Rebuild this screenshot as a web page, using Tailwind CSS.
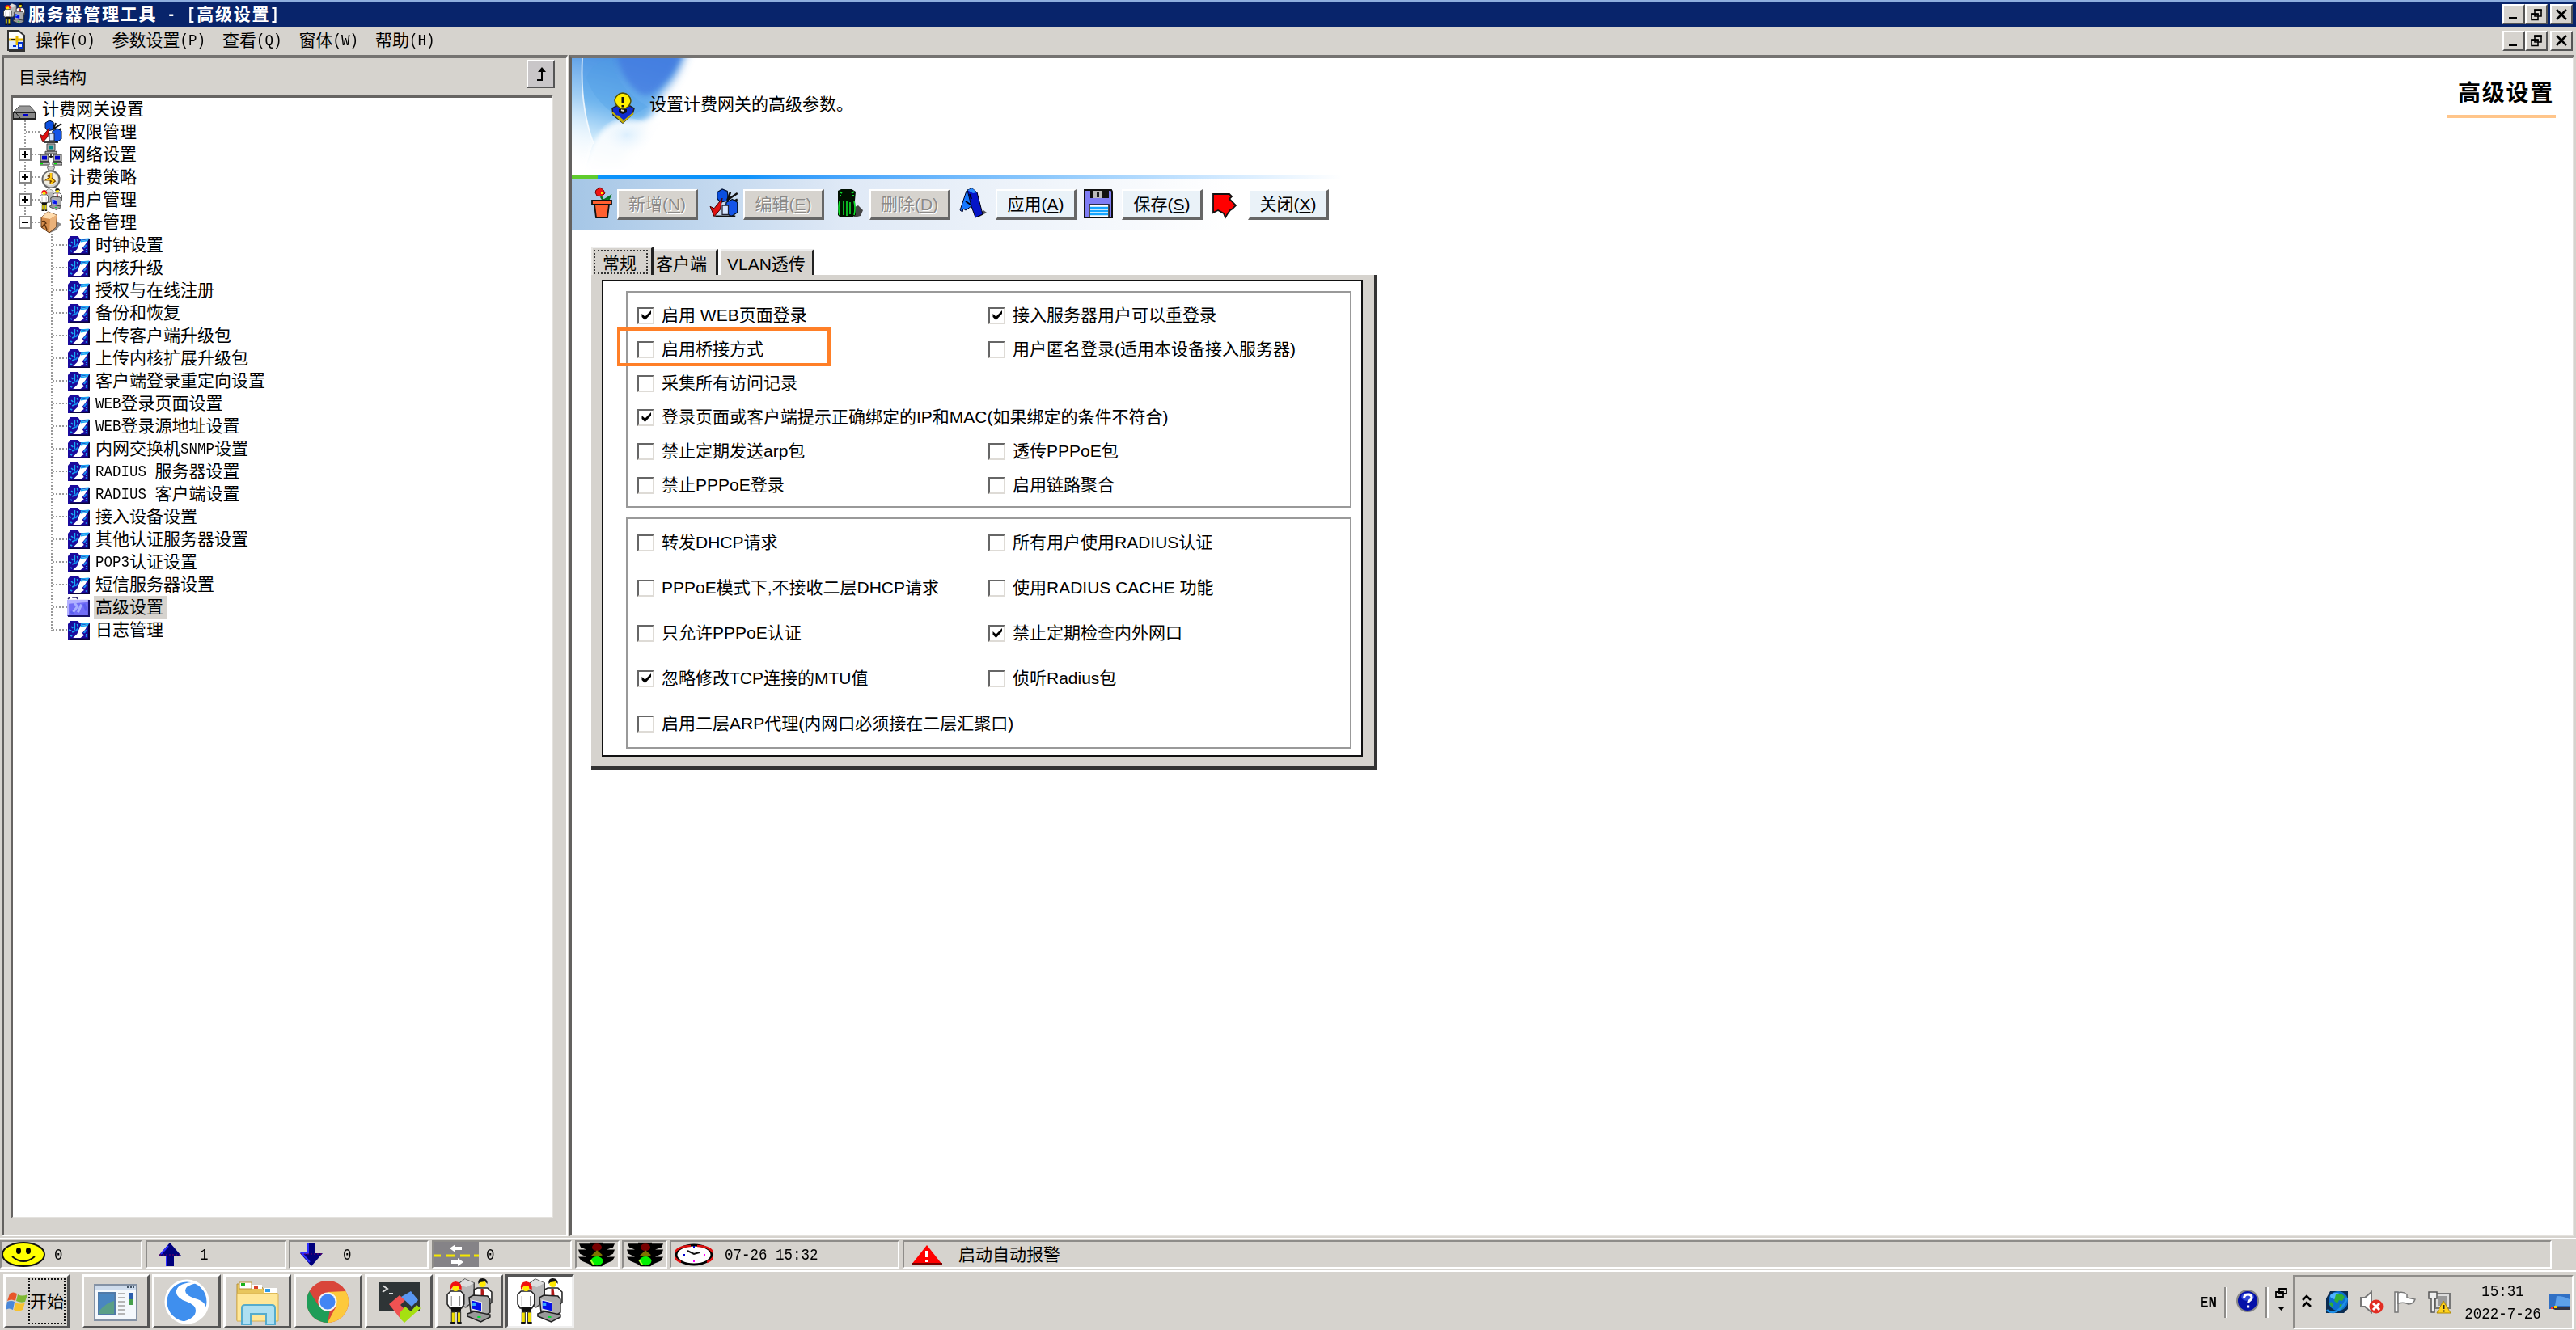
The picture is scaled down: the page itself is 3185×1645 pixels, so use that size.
<!DOCTYPE html>
<html lang="zh">
<head>
<meta charset="utf-8">
<title>服务器管理工具</title>
<script src="https://cdn.jsdelivr.net/npm/@tailwindcss/browser@4"></script>
</head>
<body class="w-[3185px] h-[1645px] overflow-hidden bg-[#d6d3ce] text-black text-[21px] leading-[28px] font-['Liberation_Sans','Noto_Sans_CJK_SC',sans-serif] whitespace-nowrap flex flex-col">

<svg class="hidden">
  <symbol id="people" viewBox="0 0 55 57" preserveAspectRatio="none">
    <path d="M13 8 22 1l11 5v22l-10 8-10-4z" fill="#b8b8b8" stroke="#444" stroke-width="1.500"/><path d="M22 1l11 5-9 5-10-3z" fill="#dedede"/>
    <path d="M33 14 37 12h12l5 5v13l-5 4-16-3z" fill="#fff" stroke="#222" stroke-width="1.500"/>
    <path d="M41 13h3l1 9-2 4-2-4z" fill="#b01818"/><circle cx="43" cy="7" r="4" fill="#ffe800"/>
    <path d="M38 7q-1-7 5-7t6 7l-3-3-6 1z" fill="#111"/>
    <path d="M1 20 5 16h12l4 4v12l-3 5H4l-3-5z" fill="#fff" stroke="#222" stroke-width="1.500"/><path d="M6 22v12M16 22v12" stroke="#888"/>
    <circle cx="11" cy="12" r="4" fill="#ffe800"/><path d="M5 14Q3 5 11 4q8 1 7 10l-3-1-1-4-6 1z" fill="#f01010"/>
    <path d="M5 35h13l-1 7H6z" fill="#111"/><path d="M6 42h4v13H6zM13 42h4v13h-4z" fill="#f0e000" stroke="#333"/>
    <path d="M5 54h5v3H5zM13 54h5v3h-5z" fill="#111"/>
    <path d="M27 24l5-3 17 1 3 4v16l-4 3-19-3z" fill="#ababab" stroke="#222" stroke-width="1.500"/>
    <path d="M30 27l12 3v11l-12-3z" fill="#0510e8" stroke="#eee"/><path d="M31 30h4v4h-4z" fill="#3af"/>
    <path d="M25 44l8-3 19 4v3l-11 6-16-7z" fill="#999" stroke="#222" stroke-width="1.500"/><path d="M37 47h4v2h-4z" fill="#0d3"/>
  </symbol>
  <symbol id="restore" viewBox="0 0 14 15"><path d="M5 1.500h8v8H5zM1 6.500h8v7.500H1z" fill="#d6d3ce" stroke="#000" stroke-width="1.600"/><path d="M4.200 2.200h9.600M.2 7.200h9.600" stroke="#000" stroke-width="2.400"/></symbol>
  <symbol id="perm" viewBox="0 0 28 28" preserveAspectRatio="none">
    <path d="M7 3 12 0l5 2 1 9-8 2-3-4z" fill="#0a4fe0" stroke="#013"/><path d="M18 10 27 4M20 3l-3 8M23 12l4-2" stroke="#111" stroke-width="2"/>
    <path d="M16 13l6-3 5 3v10l-6 4-6-4z" fill="#1455e8" stroke="#012"/><path d="M12 16h6v9h-6z" fill="#d5e6ff" stroke="#223"/>
    <path d="M0 17l4 2L12 9l-2 11-6 7z" fill="#e01010" stroke="#400" stroke-width=".8"/><path d="M5 27h18" stroke="#111" stroke-width="1.600"/>
  </symbol>
  <symbol id="net" viewBox="0 0 28 30" preserveAspectRatio="none">
    <path d="M9 1h10v9H9zM7 11h14v3H7z" fill="#aaa" stroke="#444"/><path d="M11 3h6v5h-6z" fill="#088"/><path d="M14 14v6M6 18h17" stroke="#111" stroke-width="1.600"/>
    <path d="M1 15h10v9H1zM17 15h10v9H17z" fill="#aaa" stroke="#333"/><path d="M3 17h6v5H3zM19 17h6v5h-6z" fill="#00c"/>
    <path d="M0 25h12v4H0zM16 25h12v4H16z" fill="#bbb" stroke="#333"/><path d="M1 26h3v2H1zM18 26h3v2h-3z" fill="#0e0"/>
  </symbol>
  <symbol id="coin" viewBox="0 0 28 28" preserveAspectRatio="none">
    <path d="M9 1q5-3 10 0l-2 5h-6z" fill="#ccc" stroke="#777"/><circle cx="14" cy="17" r="10.500" fill="#d0d0d0" stroke="#666" stroke-width="2"/><circle cx="13" cy="16" r="8.500" fill="#f1eee0"/>
    <path d="M14 9v5l-4 3h4v6M14 15l4 4-4 3M10 12l4 2" stroke="#7a4a00" stroke-width="3" fill="none"/><path d="M14 9v6l-3 2h3l3 2-3 3" stroke="#ffc810" stroke-width="2" fill="none"/>
  </symbol>
  <symbol id="box" viewBox="0 0 28 28" preserveAspectRatio="none">
    <path d="M13 27l7-3 7-8-6-3z" fill="#888"/><path d="M2 8 10 1l11 4-1 15-8 7-10-7z" fill="#d58d4c" stroke="#5c3210"/><path d="M2 8 10 1l11 4-8 5z" fill="#ffdcae"/>
    <path d="M13 10 21 5l-1 15-8 6z" fill="#eab27a"/><path d="M3 13q4-2 5 3M3 20l3-4 3 7" stroke="#5c3210" stroke-width="1.500" fill="none"/>
  </symbol>
  <symbol id="leaf" viewBox="0 0 26 23" preserveAspectRatio="none">
    <path d="M0 4 3 0h9l2 3h12v20H0z" fill="#1b0a9c"/><path d="M24 4h2v19H2v-1.500h22z" fill="#0a0440"/>
    <path d="M15 6l9-2-3 6-4 5 2 3-4 3H6l5-5 1-3z" fill="#fff"/><path d="M16 4l8-.5-1 2-7 1zM8 3v8M4 7l2 2M1 11l3 1M5 14l4-2M11 4l1 3M3 18l2 1M20 13l1 1M21 19h2M22 16v1" fill="none" stroke="#19a7f5" stroke-width="1.700"/>
    <path d="M12 9l-3 4M19 15l3-4" stroke="#1482f0" stroke-width="2"/>
  </symbol>
  <symbol id="folder" viewBox="0 0 27 25" preserveAspectRatio="none">
    <path d="M0 3h26v21H0z" fill="#716df6"/><path d="M1 2l2-2M6 0h5l2 2" stroke="#2a2470" stroke-width="1.500" fill="none"/><path d="M0 3h25v3L2 8v15H0z" fill="#b3b1ff"/><path d="M9 7l3 5-5 7M17 9l-4 10" stroke="#a9b0ff" stroke-width="3" fill="none"/><path d="M20 8l3 9M4 18l4 3" stroke="#5a5eee" stroke-width="3"/><path d="M26 3v21H1" stroke="#16106a" stroke-width="2" fill="none"/>
  </symbol>
  <symbol id="light" viewBox="0 0 46 42" preserveAspectRatio="none">
    <path d="M14 1h17v2h14l-2 6-8 4h10l-2 7-8 5h10l-3 7-9 5-4 4H17l-4-4-9-5-4-7h10l-8-5-2-7h10L3 9 1 3h13z" fill="#000"/>
    <circle cx="23" cy="9" r="6" fill="#780000"/><path d="M23 14l7 8-6 4-8-3z" fill="#7d7400"/><circle cx="23" cy="32" r="7.500" fill="#00f000"/><path d="M15 30l4 8" stroke="#aaff30" stroke-width="2"/>
  </symbol>
</svg>

<!-- title bar -->
<header class="h-[33px] shrink-0 border-t-2 border-[#8eaede] bg-[#08246b] flex items-center pl-1 pr-1">
  <svg class="w-[27px] h-[27px]"><use href="#people"/></svg>
  <div class="mono ml-1 text-white font-bold tracking-[1.75px] grow">服务器管理工具 - [高级设置]</div>
  <div class="winbtns flex"></div>
</header>

<!-- menu bar -->
<nav class="h-[34px] shrink-0 flex items-center pl-[9px] pr-1">
  <svg class="w-[22px] h-[27px] mr-[13px]" viewBox="0 0 22 27"><path d="M1 1h13l7 6v18H1z" fill="#fff" stroke="#333" stroke-width="2"/><path d="M2 12h18v12H2z" fill="#dce9ff"/><path d="M2 12h18M12 7v12" stroke="#e8b800" stroke-width="3"/><path d="M4 12h6" stroke="#222" stroke-width="2"/><path d="M7 20h4M14 16h5v6h-5z" stroke="#0030d0" stroke-width="2" fill="none"/><path d="M21 8v18H2" stroke="#333" stroke-width="2" fill="none"/></svg>
  <div class="flex gap-[21px] grow mono"><span>操作(O)</span><span>参数设置(P)</span><span>查看(Q)</span><span>窗体(W)</span><span>帮助(H)</span></div>
  <div class="winbtns flex"></div>
</nav>

<main class="h-[1464px] shrink-0 pt-[1px] pl-[2px] flex gap-[2px]">
  <!-- tree panel -->
  <aside class="w-[700px] h-[1461px] border-l-3 border-t-4 border-l-[#63615f] border-t-[#757371] border-r-2 border-b-2 border-r-white border-b-white pl-2">
    <div class="h-[45px] flex justify-between pl-[10px] pr-[14px] pt-[2px]">
      <span class="mt-[8px]">目录结构</span>
      <div class="w-[35px] h-[35px] border-2 border-t-white border-l-white border-r-[#555] border-b-[#555] bg-[#c9c6c8] flex items-center justify-center">
        <svg class="w-[14px] h-[18px]" viewBox="0 0 14 18"><path d="M8 3v13H2" fill="none" stroke="#000" stroke-width="2"/><path d="M8 0l5 6H3z"/></svg>
      </div>
    </div>
    <div class="relative w-[671px] h-[1390px] bg-white border-l-3 border-t-4 border-[#666462] border-r-2 border-b-2 border-r-[#e4e2de] border-b-[#e4e2de]">
      <div class="absolute left-[14px] top-[28px] h-[120px] border-l-2 border-dotted border-[#999]"></div>
      <div class="absolute left-[47px] top-[168px] h-[492px] border-l-2 border-dotted border-[#999]"></div>
      <div id="tree" class="relative"></div>
    </div>
  </aside>

  <!-- content panel -->
  <section class="w-[2479px] h-[1461px] bg-white border-l-3 border-t-4 border-l-[#63615f] border-t-[#757371] border-r-2 border-b-2 border-r-[#e4e2de] border-b-[#e4e2de]">
    <div class="h-[144px] relative flex">
      <svg class="absolute left-0 top-0 w-[180px] h-[144px]" viewBox="0 0 180 144">
        <defs>
          <linearGradient id="sky" gradientUnits="userSpaceOnUse" x1="80" y1="0" x2="45" y2="140"><stop offset="0" stop-color="#4a90e2"/><stop offset=".45" stop-color="#6db4ee"/><stop offset=".72" stop-color="#c3e4fa"/><stop offset="1" stop-color="#fff"/></linearGradient>
          <linearGradient id="edge" x1="0" y1="0" x2="0" y2="1"><stop offset="0" stop-color="#fff" stop-opacity=".1"/><stop offset="1" stop-color="#fff" stop-opacity=".9"/></linearGradient>
          <filter id="soft" filterUnits="userSpaceOnUse" x="-60" y="-60" width="300" height="300"><feGaussianBlur stdDeviation="6"/></filter>
          <filter id="soft2" filterUnits="userSpaceOnUse" x="-60" y="-60" width="300" height="300"><feGaussianBlur stdDeviation="3"/></filter>
          <radialGradient id="disc" cx=".5" cy=".4"><stop offset="0" stop-color="#dceffd"/><stop offset="1" stop-color="#fff" stop-opacity="0"/></radialGradient>
        </defs>
        <path d="M-50-50H152Q140 16 112 42L96 74 60 130-50 190z" fill="url(#sky)" filter="url(#soft)"/>
        <path d="M54-20H140Q132 16 104 40 88 52 76 36 58 20 54-20z" fill="#4376e0" opacity=".65" filter="url(#soft2)"/>
        <path d="M18 24Q26 4 50 0q2 34 44 60L66 76Q30 60 18 24z" fill="#4f9fe6" opacity=".3"/>
        <path d="M0 0h12Q10 50 26 106L14 144H0z" fill="url(#edge)"/>
        <path d="M13 0Q10 60 27 106" stroke="#fff" stroke-width="1.800" fill="none" opacity=".75"/>
        <path d="M16 144Q20 92 58 78q34 2 60-10l10 76z" fill="#fff" opacity=".85" filter="url(#soft2)"/><ellipse cx="68" cy="100" rx="36" ry="26" fill="url(#disc)"/>
      </svg>
      <svg class="relative ml-[49px] mt-[42px] w-[29px] h-[39px]" viewBox="0 0 29 39"><path d="M1 20l5-3h17l5 3-2 7-12 11L2 28z" fill="#0f2bd0" stroke="#222" stroke-width="1.500"/><path d="M1 25l13 12 13-11M7 29l7 6" stroke="#c8b400" stroke-width="2" fill="none"/><path d="M9 21h10v4l-5 2-5-2z" fill="#111"/><path d="M12 22l3 1" stroke="#ddd" stroke-width="2"/><path d="M14 1q9 1 10 10-1 8-10 10Q5 18 4 10 6 2 14 1z" fill="#fff000" stroke="#555100" stroke-width="1.500"/><path d="M14 6v8" stroke="#111" stroke-width="3"/><path d="M14 16v2.500" stroke="#111" stroke-width="3"/></svg>
      <span class="relative ml-[18px] mt-[43px]">设置计费网关的高级参数。</span>
      <div class="ml-auto mr-[21px] mt-[22px] w-[134px] h-[52px] border-b-4 border-[#ffc58a] text-[28px] leading-[43px] font-bold tracking-[1.75px] pl-[13px]">高级设置</div>
    </div>
    <div class="h-[6px] flex"><div class="w-8 bg-[#5fcb2c]"></div><div class="w-[920px] bg-linear-to-r from-[#0b93fb] from-20% via-[#8cc8fc] via-60% to-white"></div></div>
    <div id="tools" class="h-[62px] w-[960px] flex bg-linear-to-r from-[#a5c6e6] via-[#dfe9f6] via-35% to-white to-85%"></div>

    <div class="ml-[24px] mt-[21px] flex items-end h-[35px]">
      <div class="w-[77px] h-[35px] border-t-2 border-l-2 border-r-3 border-t-[#eee] border-l-[#e8e6e2] border-r-[#222] bg-[#d6d3ce] pt-[2px] pl-[1px]"><div class="h-[30px] w-[67px] border-2 border-dotted border-[#333] pl-[9px] pt-px">常规</div></div>
      <div class="w-[80px] h-[32px] bg-[#d6d3ce] border-t-2 border-t-[#eee] border-r-3 border-[#222] pl-[3px] pt-[3px]">客户端</div>
      <div class="ml-[3px] w-[116px] h-[32px] bg-[#d6d3ce] border-t-2 border-t-[#eee] border-r-3 border-[#222] pl-[8px] pt-[3px]">VLAN透传</div>
    </div>
    <div class="relative ml-[24px] w-[971px] h-[612px] bg-[#d6d3ce] border-r-3 border-b-4 border-[#333] pl-[13px] pt-[6px]">
      <div class="w-[941px] h-[590px] bg-white border-2 border-[#111] pl-[28px] pt-[12px]">
        <div class="w-[897px] h-[268px] border-2 border-[#999] pl-[12px] pt-[7px]" id="g1"></div>
        <div class="mt-[12px] w-[897px] h-[286px] border-2 border-[#999] pl-[12px] pt-px" id="g2"></div>
      </div>
      <div class="absolute left-[32px] top-[65px] w-[264px] h-[48px] border-4 border-[#ff7f27]"></div>
    </div>
  </section>
</main>

<!-- status bar -->
<footer class="mono h-[40px] shrink-0 border-t-[1px] border-white pt-[2px] flex *:h-[35px] *:flex *:items-center *:border-2 *:border-t-[#8e8c89] *:border-l-[#8e8c89] *:border-r-white *:border-b-white">
  <div class="w-[176px]"><svg class="w-[55px] h-[31px]" viewBox="0 0 55 31"><ellipse cx="27" cy="15.500" rx="26" ry="14.500" fill="#ff0" stroke="#111" stroke-width="2"/><ellipse cx="21" cy="11" rx="3" ry="4"/><ellipse cx="33" cy="11" rx="3" ry="4"/><path d="M13 18q14 12 28 0" fill="none" stroke="#111" stroke-width="2"/></svg><span class="ml-[10px]">0</span></div>
  <div class="w-[174px] ml-1"><svg class="w-[28px] h-[29px] ml-[14px]" viewBox="0 0 28 29"><path d="M14 0l14 16H19v13H9V16H0z" fill="#00007c"/><path d="M12 4 3 14M10 17v12" stroke="#2d2dff" stroke-width="2"/><path d="M1 15h26" stroke="#800060" stroke-dasharray="2 2"/></svg><span class="ml-[23px]">1</span></div>
  <div class="w-[173px] ml-[3px]"><svg class="w-[28px] h-[29px] ml-[12px]" viewBox="0 0 28 29"><path d="M14 29l14-16H19V0H9v13H0z" fill="#00007c"/><path d="M10 0v13H2l10 11" stroke="#2d2dff" stroke-width="2" fill="none"/><path d="M1 14h26" stroke="#800060" stroke-dasharray="2 2"/></svg><span class="ml-[25px]">0</span></div>
  <div class="w-[173px] ml-[4px]"><svg class="w-[56px] h-[31px]" viewBox="0 0 56 31"><path fill="#858387" d="M0 0h56v31H0z"/><path d="M1 17h55" stroke="#f5e800" stroke-width="3" stroke-dasharray="8 6 12 6 12 5"/><path d="M20 8l7-5v3h8v4h-8v3zM37 25l-7-5v3h-8v4h8v3z" fill="#fff"/></svg><span class="ml-[9px]">0</span></div>
  <div class="w-[55px] ml-[4px]"><svg class="w-[46px] h-[31px] ml-[2px]"><use href="#light"/></svg></div>
  <div class="w-[56px] ml-[3px]"><svg class="w-[46px] h-[31px] ml-[4px]"><use href="#light"/></svg></div>
  <div class="w-[284px] ml-[3px]"><svg class="w-[48px] h-[28px] ml-[4px]" viewBox="0 0 48 28"><ellipse cx="24" cy="14" rx="22" ry="12" fill="#fff" stroke="#000" stroke-width="3"/><path d="M8 23A20 11 0 0 1 20 3M28 3a20 11 0 0 1 12 20" fill="none" stroke="#e01010" stroke-width="2.500"/><path d="M16 9l8 4 7-2" fill="none" stroke="#111" stroke-width="2"/><path d="M24 3v3M11 14h2" stroke="#00c" stroke-width="2"/><path d="M36 14h2M24 21v2" stroke="#f0f" stroke-width="2"/></svg><span class="ml-[14px]">07-26 15:32</span></div>
  <div class="w-[2039px] ml-[4px]"><svg class="w-[38px] h-[24px] ml-[9px]" viewBox="0 0 38 24"><path d="M19 0l19 24H0z" fill="#f00"/><path d="M1 23h37" stroke="#700" stroke-width="2"/><path d="M19 7v8M19 18v3" stroke="#fff" stroke-width="4"/></svg><span class="ml-[20px]">启动自动报警</span></div>
</footer>

<!-- taskbar -->
<div class="h-[74px] shrink-0 border-t-2 border-white flex pt-[3px] pl-1 pr-[3px]">
  <div class="w-[82px] h-[67px] border-3 border-t-white border-l-white border-r-[#555] border-b-[#555] flex items-center">
    <svg class="w-[28px] h-[28px]" viewBox="0 0 28 28"><path d="M5 4q4-3 9 0l-2 9q-5-3-10 0z" fill="#e8562a"/><path d="M15 5q5 3 12 0l-3 9q-5 2-11-1z" fill="#7fb833"/><path d="M2 14q5-2 9 0l-2 10q-5-3-9 0z" fill="#4a88d8"/><path d="M12 15q6 3 12 0l-3 9q-5 3-11 0z" fill="#f7c22e"/></svg>
    <div class="w-[46px] h-[57px] border-2 border-dotted border-[#111] flex items-center justify-center">开始</div>
  </div>
  <div id="apps" class="ml-[15px] flex gap-[3px]"></div>
  <div class="ml-auto flex items-center">
    <span class="mono font-bold mr-[9px]">EN</span>
    <div class="w-[4px] h-[38px] border-l-2 border-r-2 border-l-[#8e8c89] border-r-white"></div>
    <svg class="w-[28px] h-[28px] ml-[11px] mr-[8px] mb-1" viewBox="0 0 28 28"><circle cx="14" cy="14" r="13" fill="#0510a8" stroke="#888" stroke-width="2"/><ellipse cx="14" cy="9" rx="8" ry="5" fill="#3048d8"/><path d="M9.500 11q0-5 5-5 4.500 0 4.500 4 0 2-3 4-1.500 1-1.500 3" fill="none" stroke="#fff" stroke-width="3"/><path d="M13 19.500h3.200v3H13z" fill="#fff"/></svg>
    <div class="w-[4px] h-[38px] border-l-2 border-r-2 border-l-[#8e8c89] border-r-white mr-[8px]"></div>
    <svg class="w-[16px] h-[30px] mr-[6px] mb-2" viewBox="0 0 16 30"><path d="M5 2h9v6H5zM1 6h9v6H1z" fill="#d6d3ce" stroke="#000" stroke-width="1.800"/><path d="M3 24h9l-4.500 5z"/></svg>
    <div class="w-[347px] h-[67px] border-2 border-t-[#8e8c89] border-l-[#8e8c89] border-r-white border-b-white flex items-center pl-[9px]">
      <svg class="w-[12px] h-[18px] mb-1" viewBox="0 0 12 18"><path d="M1 8l5-5 5 5M1 16l5-5 5 5" fill="none" stroke="#000" stroke-width="2.500"/></svg>
      <svg class="w-[29px] h-[29px] ml-[17px]" viewBox="0 0 29 29"><path d="M6 1h22v22l-5 5H1V10z" fill="#0c2c50"/><circle cx="16" cy="13" r="12" fill="#0d6fd0"/><ellipse cx="13" cy="7" rx="7" ry="4" fill="#4fb4ff"/><path d="M13 5l7-1 4 4-3 5-4-1-2 4-4-3zM18 17l5 1-2 5-4 1zM7 14l3 3-1 4-4-4z" fill="#2fae35"/><path d="M2 24q2 3 8 3 12-3 17-18" stroke="#1d8fe8" stroke-width="2.500" fill="none"/></svg>
      <svg class="w-[29px] h-[29px] ml-[14px]" viewBox="0 0 29 29"><path d="M1 9h5l8-7v25l-8-7H1z" fill="#fff" stroke="#777" stroke-width="2"/><circle cx="20" cy="20" r="8.500" fill="#e22c22"/><path d="M16 16l8 8M24 16l-8 8" stroke="#fff" stroke-width="3"/></svg>
      <svg class="w-[29px] h-[29px] ml-[12px]" viewBox="0 0 29 29"><path d="M2 2h4v25H2z" fill="#fff" stroke="#777" stroke-width="1.500"/><path d="M6 3q6-2 11 2v4l10 2q-2 6-8 6-5-3-13-1z" fill="#fff" stroke="#777" stroke-width="1.500"/></svg>
      <svg class="w-[29px] h-[29px] ml-[14px]" viewBox="0 0 29 29"><path d="M9 4h18v18H9z" fill="#ddd" stroke="#777" stroke-width="2"/><path d="M12 7h12v12H12z" fill="#999"/><path d="M1 2h10v8H8v17H4V10H1z" fill="#eee" stroke="#555" stroke-width="1.500"/><path d="M19 13l9 15H11z" fill="#ffd21c" stroke="#b08a00"/><path d="M19.500 18v5M19.500 24.500v2" stroke="#222" stroke-width="2"/></svg>
      <div class="mono ml-[14px] w-[99px] text-center leading-[28px]"><div>15:31</div><div>2022-7-26</div></div>
      <svg class="w-[28px] h-[22px] ml-[7px]" viewBox="0 0 28 22"><path d="M0 0h27v19H0z" fill="#2f6fc4"/><path d="M0 16h27v4H8z" fill="#334"/><path d="M10 3q9 0 16 4v8H8z" fill="#5da0ea"/><path d="M3 16h3v3H3z" fill="#f33"/><path d="M7 15h3v3H7z" fill="#fc0"/></svg>
    </div>
  </div>
</div>

<script>
// half-width characters: narrow and tall, two to one full-width cell
const mono = s => s.replace(/[\x20-\x7e]+/g, t => `<span class="inline-block h-[28px] align-top leading-[28px] text-[17.5px] whitespace-pre scale-y-[1.2] font-['Liberation_Mono',monospace]">${t}</span>`);
document.querySelectorAll('.mono').forEach(root => {
  const walk = document.createTreeWalker(root, NodeFilter.SHOW_TEXT), nodes = [];
  while (walk.nextNode()) if (walk.currentNode.data.trim()) nodes.push(walk.currentNode);
  nodes.forEach(n => { const s = document.createElement('span'); s.innerHTML = mono(n.data); n.replaceWith(s); });
});

// window buttons
const wb = inner => `<div class="w-[28px] h-[25px] bg-[#d6d3ce] border-2 border-t-white border-l-white border-r-[#555] border-b-[#555] flex items-center justify-center">${inner}</div>`;
document.querySelectorAll('.winbtns').forEach(e => e.innerHTML =
  wb('<svg class="w-[14px] h-[15px]" viewBox="0 0 14 15"><path d="M1 11h10v3H1z"/></svg>') +
  wb('<svg class="w-[14px] h-[16px]"><use href="#restore"/></svg>') + '<div class="w-[3px]"></div>' +
  wb('<svg class="w-[14px] h-[14px]" viewBox="0 0 14 14"><path d="M1 1l12 12M13 1L1 13" stroke="#000" stroke-width="2.500"/></svg>'));

// tree
const exp = k => `<div class="relative w-[16px] h-[16px] ml-[7px] bg-white border-2 border-[#888] flex items-center justify-center"><svg class="w-[8px] h-[8px]" viewBox="0 0 8 8"><path d="${k === '+' ? 'M0 4h8M4 0v8' : 'M0 4h8'}" stroke="#000" stroke-width="2"/></svg></div><div class="w-[10px] border-t-2 border-dotted border-[#999]"></div>`;
const top1 = [['', 'perm', '权限管理'], ['+', 'net', '网络设置'], ['+', 'coin', '计费策略'], ['+', 'people', '用户管理'], ['-', 'box', '设备管理']];
const kids = ['时钟设置','内核升级','授权与在线注册','备份和恢复','上传客户端升级包','上传内核扩展升级包','客户端登录重定向设置','WEB登录页面设置','WEB登录源地址设置','内网交换机SNMP设置','RADIUS 服务器设置','RADIUS 客户端设置','接入设备设置','其他认证服务器设置','POP3认证设置','短信服务器设置','高级设置','日志管理'];
let h = `<div class="h-[28px] flex items-center"><svg class="w-[29px] h-[18px] mt-2" viewBox="0 0 29 18"><path d="M0 9 8 1h13l7 8z" fill="#999" stroke="#555"/><path d="M0 9h28v8H0z" fill="#888" stroke="#222" stroke-width="2"/><path d="M4 10l5 6" stroke="#111"/><path d="M12 11h7v3h-7z" fill="#00c"/></svg><span class="ml-[7px]">计费网关设置</span></div>`;
for (const [k, i, t] of top1) h += `<div class="h-[28px] flex items-center">${k ? exp(k) : '<div class="w-[17px] ml-[16px] border-t-2 border-dotted border-[#999]"></div>'}<svg class="w-[28px] h-[28px] relative"><use href="#${i}"/></svg><span class="ml-[8px]">${t}</span></div>`;
for (const t of kids) {
  const on = t === '高级设置';
  h += `<div class="h-[28px] flex items-center"><div class="w-[18px] ml-[49px] border-t-2 border-dotted border-[#999]"></div>${on ? '<svg class="w-[28px] h-[24px]"><use href="#folder"/></svg>' : '<svg class="w-[27px] h-[23px] ml-px"><use href="#leaf"/></svg>'}<span class="ml-[5px] pl-[2px] pr-[4px] h-[28px] ${on ? 'bg-[#d6d3ce]' : ''}">${mono(t)}</span></div>`;
}
document.getElementById('tree').innerHTML = h;

// toolbar
const art = [
  '<path d="M30 13l5-3 4 3 2 4-4 4-6-1-2-4z" fill="#f01414" stroke="#700"/><path d="M36 17h3" stroke="#fe0" stroke-width="2"/><path d="M36 21l3 5 8-5-2 5h-7" stroke="#0a7020" stroke-width="2.500" fill="none"/><path d="M25 26h24v5H25z" fill="#ff6030" stroke="#111" stroke-width="1.800"/><path d="M28 31h18l-2 16H30z" fill="#ff6030" stroke="#111" stroke-width="1.800"/>',
  '<g transform="translate(15 12) scale(1.25)"><path d="M7 3 12 0l5 2 1 9-8 2-3-4z" fill="#0a4fe0" stroke="#013"/><path d="M18 10 27 4M20 3l-3 8M23 12l4-2" stroke="#111" stroke-width="2"/><path d="M16 13l6-3 5 3v10l-6 4-6-4z" fill="#1455e8" stroke="#012"/><path d="M12 16h6v9h-6z" fill="#d5e6ff" stroke="#223"/><path d="M0 17l4 2L12 9l-2 11-6 7z" fill="#e01010" stroke="#400" stroke-width=".8"/><path d="M5 27h20" stroke="#111" stroke-width="2"/></g>',
  '<path d="M36 35l6-3 6 6-3 7-8 2z" fill="#444"/><path d="M17 14l4-2h13l5 3-1 11 1 18-5 3H20l-3-3z" fill="#001000"/><path d="M19 27q-2 9 0 17M24 27v17M28 27v18M32 28v15M37 27q2 9 0 17" stroke="#0ee02c" stroke-width="1.600" fill="none"/><path d="M19 15l3 2M37 15l-3 2M19 20h2M35 20h2" stroke="#0ee02c" stroke-width="2" fill="none"/><path d="M26 28v15" stroke="#001000"/>',
  '<path d="M36 46l9-5-4-3-8 7z" fill="#555"/><path d="M12 38l8-24 7-3-1 22-7 5-3-2-1 4z" fill="#1677ff" stroke="#002"/><path d="M21 13l6-2 6 5 7 27-9 4-5-14z" fill="#0414c8" stroke="#001"/><path d="M21 13l6-2 6 5-5 1z" fill="#2b8dff"/><path d="M19 27l6 4M24 18l2 6" stroke="#001" stroke-width="2"/>',
  '<path d="M10 13h33l1 2v32H10z" fill="#7f7df5" stroke="#111" stroke-width="2"/><path d="M17 13h23v10H17z" fill="#111"/><path d="M20 14h11v9H20z" fill="#bbb"/><path d="M25 15h3v7h-3z" fill="#222"/><path d="M16 31h24v16H16z" fill="#fff" stroke="#111" stroke-width="1.500"/><path d="M17 35h22M17 39h22M17 43h22" stroke="#16a6ff" stroke-width="2.500"/>',
  '<path d="M13 18h20l3 3-3 3 8 8-4 4-3 2-3 4-3 5-2-5-7-4-6 3z" fill="#f00" stroke="#111" stroke-width="1.800"/>'
];
const tb = [['新增','N',0],['编辑','E',0],['删除','D',0],['应用','A',1],['保存','S',1],['关闭','X',1]];
document.getElementById('tools').innerHTML = tb.map(([t, k, on], i) => `<div class="w-[156px] shrink-0 flex"><svg class="w-[56px] h-[62px] shrink-0" viewBox="0 0 56 62">${art[i]}</svg><div class="mt-[12px] w-[100px] h-[38px] border-2 border-t-white border-l-white border-r-3 border-b-3 border-r-[#666] border-b-[#666] text-center leading-[34px] ${on ? 'bg-[#eaf2f8] text-black' : 'bg-[#d6d3ce] text-[#8c8a88] [text-shadow:1px_1px_0_white]'}">${t}(<span class="underline decoration-2 underline-offset-2">${k}</span>)</div></div>`).join('');

// option groups: leading * marks a checked box
const cb = s => `<div class="flex items-center gap-[9px]"><div class="w-[21px] h-[21px] bg-white border-2 border-t-[#666] border-l-[#666] border-r-[#dedbd6] border-b-[#dedbd6] flex items-center justify-center">${s[0] === '*' ? '<svg class="w-[14px] h-[14px]" viewBox="0 0 14 14"><path d="M1.500 5v4l4 4L13 5V1L5.500 8.500z"/></svg>' : ''}</div><span>${s.replace('*', '')}</span></div>`;
const row = (r, c) => `<div class="${c} flex">` + `<div class="w-[434px] flex">${cb(r[0])}</div>` + (r[1] ? cb(r[1]) : '') + '</div>';
document.getElementById('g1').innerHTML = [['*启用 WEB页面登录','*接入服务器用户可以重登录'],['启用桥接方式','用户匿名登录(适用本设备接入服务器)'],['采集所有访问记录'],['*登录页面或客户端提示正确绑定的IP和MAC(如果绑定的条件不符合)'],['禁止定期发送arp包','透传PPPoE包'],['禁止PPPoE登录','启用链路聚合']].map(r => row(r, 'h-[42px]')).join('');
document.getElementById('g2').innerHTML = [['转发DHCP请求','所有用户使用RADIUS认证'],['PPPoE模式下,不接收二层DHCP请求','使用RADIUS CACHE 功能'],['只允许PPPoE认证','*禁止定期检查内外网口'],['*忽略修改TCP连接的MTU值','侦听Radius包'],['启用二层ARP代理(内网口必须接在二层汇聚口)']].map(r => row(r, 'h-[56px]')).join('');

// taskbar applications
const apps = [
  '<path d="M2 9h52v44H2z" fill="#f4f8fc" stroke="#8492a5" stroke-width="2"/><path d="M3 10h50v5H3z" fill="#cfdcec"/><path d="M42 12h9" stroke="#456" stroke-width="2" stroke-dasharray="2 2"/><path d="M7 19h20v27H7z" fill="#5a9f86" stroke="#507aa8" stroke-width="2"/><path d="M8 20h18v9q-9 2-18 12z" fill="#4a86c0"/><path d="M31 20h9M31 25h9M31 30h9M31 35h9M31 40h9M31 45h9" stroke="#b5b5b5" stroke-width="2"/><path d="M45 19h4v8h-4z" fill="#2b5fae"/><path d="M45 27h4v7h-4z" fill="#46a04b"/>',
  '<ellipse cx="28" cy="30" rx="26" ry="26" fill="#3f8fee" stroke="#fff" stroke-width="3"/><path d="M34 6Q14 8 15 19q1 7 13 11 11 4 11 11 0 10-18 14 24 2 31-12 2-13-14-17-12-4-12-10 0-6 14-9z" fill="#fff"/>',
  '<path d="M3 8h18l3 4h10l2 3h16v38H3z" fill="#e8c65c" stroke="#b8923a"/><path d="M6 6h15v8H6z" fill="#fff" stroke="#b8923a"/><path d="M8 7h5v4H8z" fill="#1bb21b"/><path d="M22 9h12v5H22z" fill="#fff"/><path d="M24 10h5v4h-5z" fill="#d8432b"/><path d="M36 13h16v6H36z" fill="#fff"/><path d="M38 14h6v4h-6z" fill="#2d9be8"/><path d="M3 20h51v34H3z" fill="#ffe798" stroke="#d8b050"/><path d="M9 38q0-4 4-4h33q4 0 4 4v20H39V45H20v13H9z" fill="#a8e0f8" stroke="#4aa8d0" stroke-width="2" opacity=".93"/>',
  '<circle cx="28" cy="30" r="26" fill="#d9453a"/><path d="M28 56A26 26 0 0 0 50.500 17L28 18l10 19z" fill="#fdc93c"/><path d="M5.500 17A26 26 0 0 1 50.500 17H28z" fill="#d9453a"/><path d="M5.500 17l12 19 8 5 5 1-2.500 14A26 26 0 0 1 5.500 17z" fill="#1f9d58"/><circle cx="28" cy="30" r="11.500" fill="#f5f5f5"/><circle cx="28" cy="30" r="9.500" fill="#4285f4"/>',
  '<path d="M4 6h50v35H4z" fill="#2e3436"/><path d="M8 10l6 4-6 4M16 20h5" stroke="#ddd" stroke-width="2" fill="none"/><path d="M16 33l13-11 7 6-6 6 8 8-8 9z" fill="#f05252"/><path d="M31 24l12-7 9 11-8 8z" fill="#5a97f2"/><path d="M29 44l7-8 7 6 7-8 5 4-20 18-6-6z" fill="#a6e010"/>',
  '', ''
];
document.getElementById('apps').innerHTML = apps.map((a, i) => `<div class="w-[84.4px] h-[67px] border-3 flex items-center justify-center ${i === 6 ? 'bg-white border-t-[#555] border-l-[#555] border-r-[#eee] border-b-[#eee]' : 'border-t-white border-l-white border-r-[#555] border-b-[#555]'}">${a ? `<svg class="w-[56px] h-[60px]" viewBox="0 0 56 60">${a}</svg>` : '<svg class="w-[57px] h-[57px]"><use href="#people"/></svg>'}</div>`).join('');
</script>
</body>
</html>
